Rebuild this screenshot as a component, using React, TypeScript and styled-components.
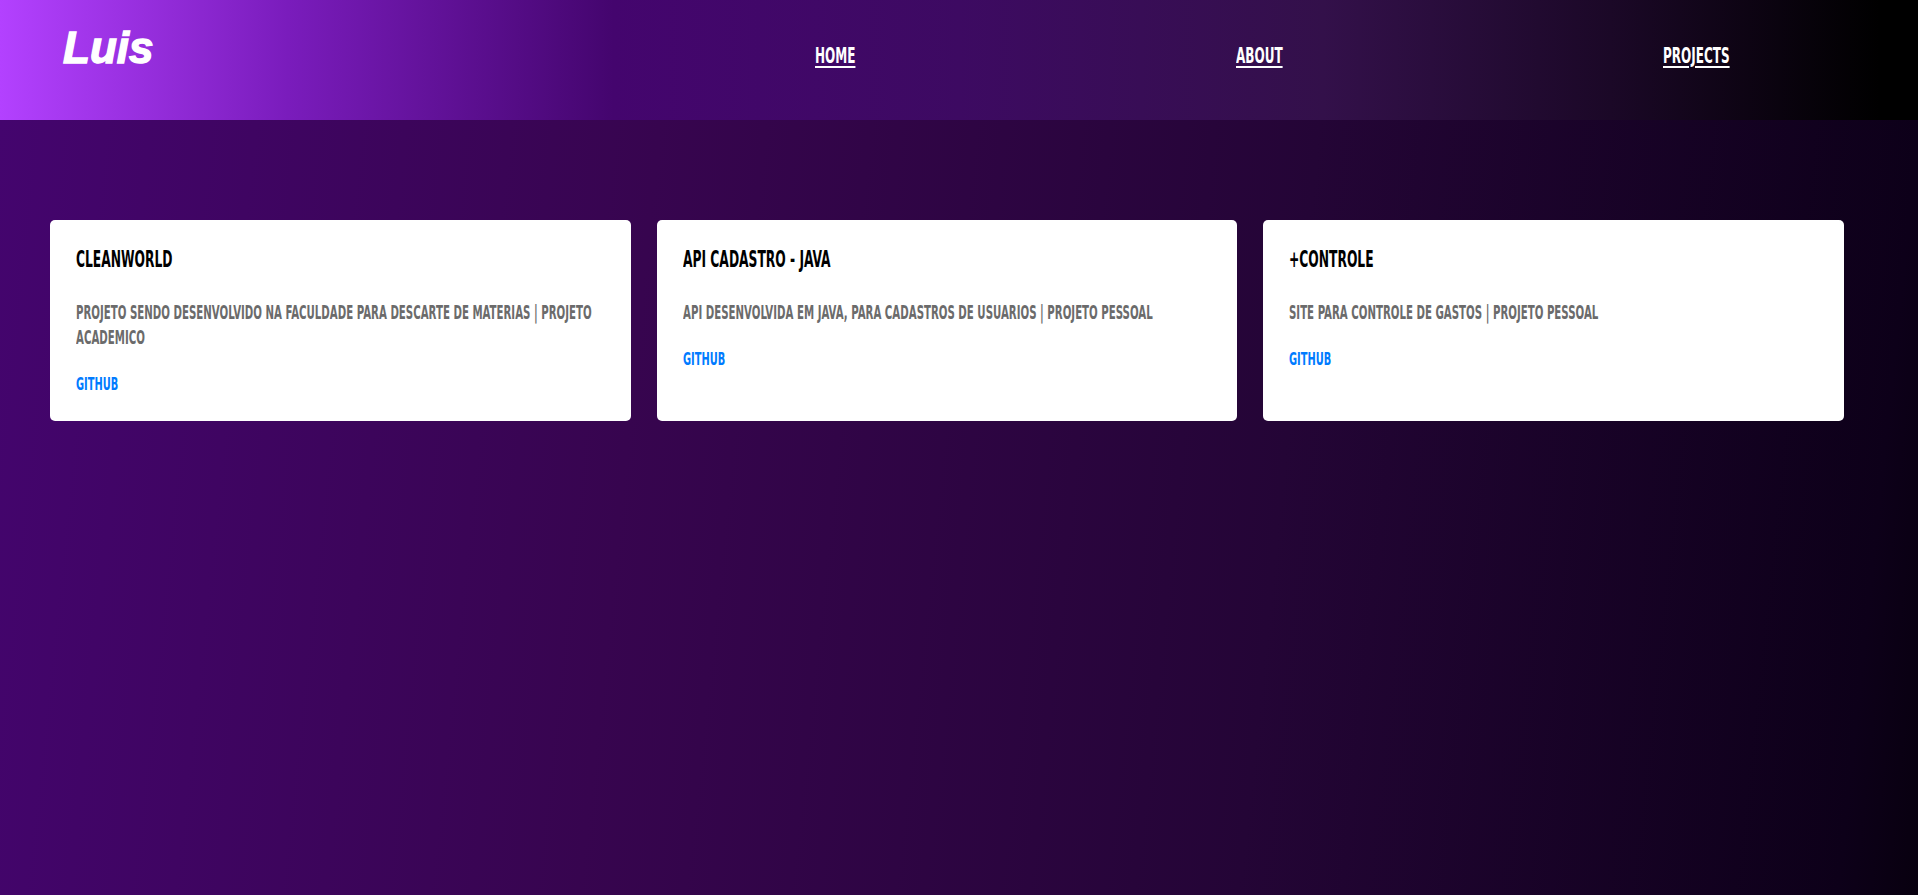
import React from "react";
import styled, { createGlobalStyle, css } from "styled-components";

const K = 0.607;

const GlobalStyle = createGlobalStyle`
  html, body { margin: 0; padding: 0; }
  body {
    background: #0a0012;
    font-family: "Liberation Sans", Arial, sans-serif;
  }
  * { box-sizing: border-box; }
`;

const condensed = css`
  font-family: "DejaVu Sans Condensed", "Liberation Sans Narrow", "Liberation Sans", sans-serif;
  font-weight: 700;
  text-transform: uppercase;
  transform: scaleX(${K});
  transform-origin: left top;
`;

const Page = styled.div`
  min-height: 100vh;
  display: flex;
  flex-direction: column;
`;

const Header = styled.header`
  height: 120px;
  display: flex;
  align-items: flex-start;
  padding-left: 63px;
  background: linear-gradient(
    90deg,
    #b341ff 0%,
    #7a1cbc 15%,
    #44056e 32%,
    #3d0a62 50%,
    #33104a 69%,
    #1b0827 84%,
    #000 98%
  );
`;

const Logo = styled.div`
  width: 752px;
  flex-shrink: 0;
  margin-top: 26px;
  font-family: "Liberation Sans", Arial, sans-serif;
  font-size: 44px;
  line-height: 44px;
  font-weight: 700;
  font-style: italic;
  color: #fff;
  -webkit-text-stroke: 1.4px #fff;
`;

const Nav = styled.nav`
  display: grid;
  grid-template-columns: 421px 427px auto;
  margin-top: 45px;
`;

const NavLink = styled.a`
  ${condensed};
  justify-self: start;
  display: inline-block;
  font-size: 22px;
  line-height: 22px;
  color: #fff;
  text-decoration: underline;
  text-decoration-thickness: 2px;
  text-underline-offset: 3px;
`;

const Main = styled.main`
  flex: 1;
  padding: 100px 74px 0 50px;
  background: linear-gradient(
    96deg,
    #44056e 0%,
    #37054f 33%,
    #240536 66%,
    #0d0019 96%,
    #08000f 100%
  );
`;

const CardGrid = styled.div`
  display: grid;
  grid-template-columns: repeat(3, 1fr);
  gap: 26px;
  align-items: stretch;
`;

const Card = styled.article`
  background: #fff;
  border-radius: 5px;
  padding: 28px 20px 28px 26px;
  overflow: hidden;
`;

const CardTitle = styled.h5`
  ${condensed};
  width: calc(100% / ${K});
  margin: 0;
  font-size: 22.5px;
  line-height: 22px;
  color: #000;
`;

const CardText = styled.p`
  ${condensed};
  width: calc(100% / ${K});
  margin: 30px 0 0;
  font-size: 18.7px;
  line-height: 25px;
  color: #6b6b6b;
`;

const CardLink = styled.a`
  ${condensed};
  display: block;
  width: calc(100% / ${K});
  margin-top: 25px;
  font-size: 18px;
  line-height: 17.5px;
  color: #007bff;
  text-decoration: none;
`;

const projects = [
  {
    title: "Cleanworld",
    text: "Projeto sendo desenvolvido na faculdade para descarte de materias | Projeto academico",
  },
  {
    title: "API Cadastro - Java",
    text: "API desenvolvida em java, para cadastros de usuarios | Projeto pessoal",
  },
  {
    title: "+Controle",
    text: "Site para controle de gastos | Projeto pessoal",
  },
];

export default function App() {
  return (
    <>
      <GlobalStyle />
      <Page>
        <Header>
          <Logo>Luis</Logo>
          <Nav>
            <NavLink href="#">Home</NavLink>
            <NavLink href="#">About</NavLink>
            <NavLink href="#">Projects</NavLink>
          </Nav>
        </Header>
        <Main>
          <CardGrid>
            {projects.map((p) => (
              <Card key={p.title}>
                <CardTitle>{p.title}</CardTitle>
                <CardText>{p.text}</CardText>
                <CardLink href="#">Github</CardLink>
              </Card>
            ))}
          </CardGrid>
        </Main>
      </Page>
    </>
  );
}
